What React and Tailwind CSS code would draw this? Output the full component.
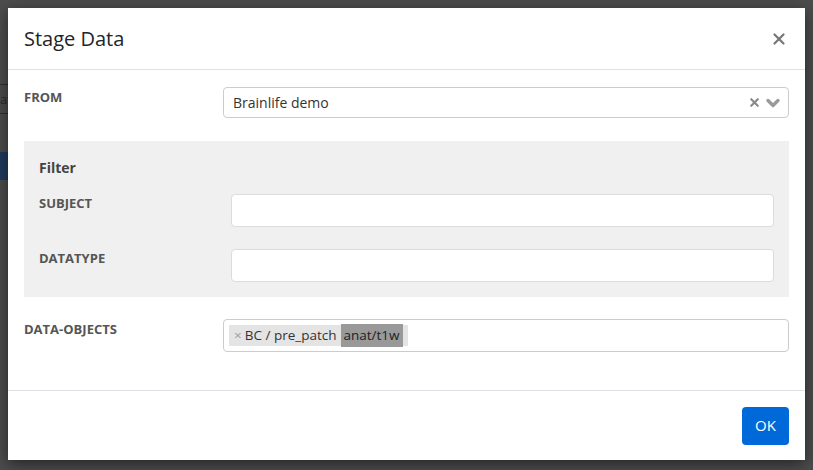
import { X, ChevronDown } from "lucide-react";

const font = { fontFamily: '"Open Sans", "Noto Sans", sans-serif' };

function Label({ children, className = "" }) {
  return (
    <div className={"text-[13px] font-bold uppercase text-[#555] " + className}>
      {children}
    </div>
  );
}

export default function App() {
  return (
    <div className="relative h-[470px] w-[813px] overflow-hidden bg-[#4c4c4c]" style={font}>
      {/* dimmed page behind the modal */}
      <div className="absolute left-0 top-[84px] h-[30px] w-[8px] border-y border-[#2e2e2e] text-[13px] leading-[28px] text-[#2a2a2a]">
        at
      </div>
      <div className="absolute left-0 top-[152px] h-[28px] w-[8px] bg-[#1f3a5c]" />

      <div className="absolute left-[8px] top-[8px] flex h-[452px] w-[797px] flex-col bg-white shadow-[0_4px_14px_rgba(0,0,0,0.5)]">
        {/* header */}
        <div className="flex h-[62px] items-center justify-between border-b border-[#dee2e6] px-4">
          <h2 className="mt-[1px] text-[20px] font-medium text-[#212529]">Stage Data</h2>
          <X className="mr-[1px] h-[18px] w-[18px] text-[#777]" strokeWidth={3} />
        </div>

        {/* body */}
        <div className="flex-1 border-b border-[#dee2e6] px-4 pt-[17px]">
          <div className="flex">
            <Label className="w-[199px] pt-[1px]">From</Label>
            <div className="flex h-[31px] flex-1 items-center justify-between rounded border border-[#ccc] pl-[9px] pr-[5px]">
              <span className="text-[14px] text-[#333]">Brainlife demo</span>
              <div className="flex items-center gap-[2px]">
                <X className="h-[13px] w-[13px] text-[#888]" strokeWidth={4} />
                <ChevronDown className="h-[20px] w-[20px] text-[#999]" strokeWidth={4} />
              </div>
            </div>
          </div>

          <div className="mt-[23px] h-[156px] bg-[#f0f0f0] px-[15px] pt-[16px]">
            <div className="text-[14px] font-bold text-[#444]">Filter</div>
            <div className="mt-[16px] flex">
              <Label className="w-[192px]">Subject</Label>
              <div className="h-[33px] flex-1 rounded border border-[#dcdcdc] bg-white" />
            </div>
            <div className="mt-[22px] flex">
              <Label className="w-[192px]">Datatype</Label>
              <div className="h-[33px] flex-1 rounded border border-[#dcdcdc] bg-white" />
            </div>
          </div>

          <div className="mt-[22px] flex">
            <Label className="w-[199px] pt-[1px]">Data-objects</Label>
            <div className="flex h-[33px] flex-1 items-center rounded border border-[#ccc] pl-[5px]">
              <div className="flex h-[21px] items-center bg-[#e4e4e4] pl-[5px] pr-[5px] text-[13.5px] text-[#333]">
                <span className="mr-[3px] text-[#999]">×</span>
                <span>BC / pre_patch</span>
                <span className="ml-[4px] flex h-[23px] items-center bg-[#999] px-[3px] text-[#222]">
                  anat/t1w
                </span>
              </div>
            </div>
          </div>
        </div>

        {/* footer */}
        <div className="flex h-[69px] items-center justify-end px-4">
          <button className="h-[38px] w-[47px] rounded bg-[#0069d9] text-[15px] text-white">
            OK
          </button>
        </div>
      </div>
    </div>
  );
}
